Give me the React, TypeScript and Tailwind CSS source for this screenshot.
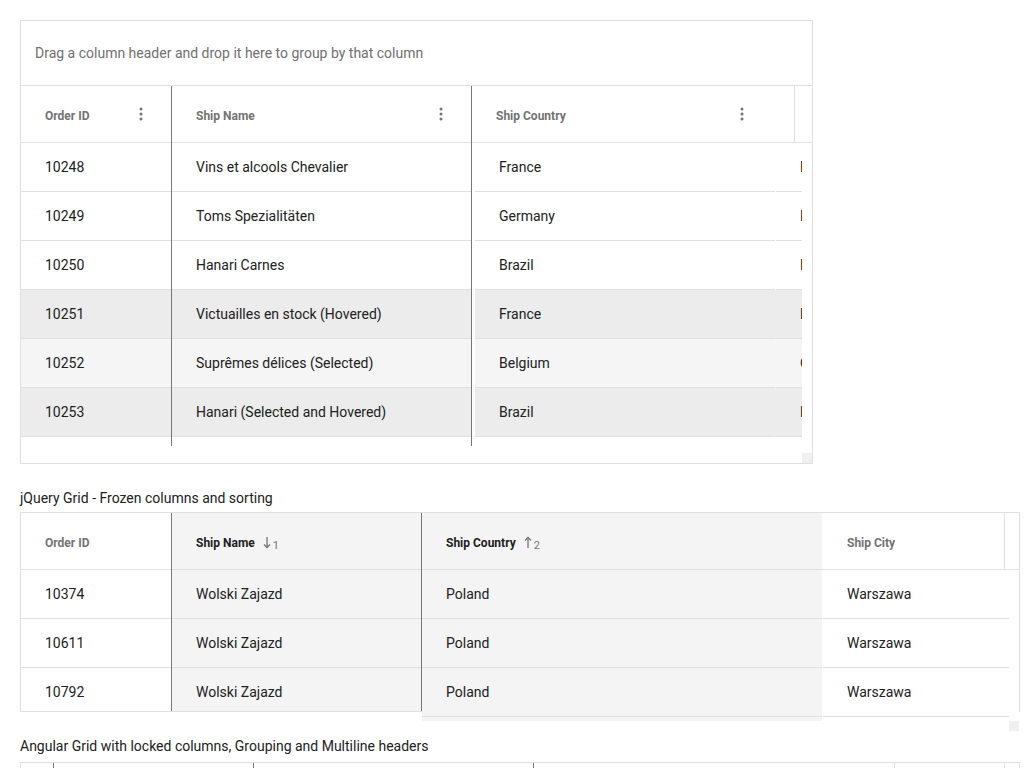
import React from 'react';

type Row = { id: string; name: string; country: string; city: string; bg: string };

const ROWS1: Row[] = [
  { id: '10248', name: 'Vins et alcools Chevalier', country: 'France', city: 'Reims', bg: '' },
  { id: '10249', name: 'Toms Spezialitäten', country: 'Germany', city: 'Münster', bg: '' },
  { id: '10250', name: 'Hanari Carnes', country: 'Brazil', city: 'Rio de Janeiro', bg: '' },
  { id: '10251', name: 'Victuailles en stock (Hovered)', country: 'France', city: 'Lyon', bg: 'bg-[#ececec]' },
  { id: '10252', name: 'Suprêmes délices (Selected)', country: 'Belgium', city: 'Charleroi', bg: 'bg-[#f5f5f5]' },
  { id: '10253', name: 'Hanari (Selected and Hovered)', country: 'Brazil', city: 'Rio de Janeiro', bg: 'bg-[#ececec]' },
];

const ROWS2 = [
  { id: '10374', name: 'Wolski Zajazd', country: 'Poland', city: 'Warszawa' },
  { id: '10611', name: 'Wolski Zajazd', country: 'Poland', city: 'Warszawa' },
  { id: '10792', name: 'Wolski Zajazd', country: 'Poland', city: 'Warszawa' },
];

function Kebab() {
  return (
    <svg width="20" height="20" viewBox="0 0 24 24" className="shrink-0">
      <circle cx="12" cy="6" r="1.8" fill="#757575" />
      <circle cx="12" cy="12" r="1.8" fill="#757575" />
      <circle cx="12" cy="18" r="1.8" fill="#757575" />
    </svg>
  );
}

function SortArrow({ up }: { up?: boolean }) {
  return (
    <svg width="10" height="13" viewBox="0 0 10 13" className="shrink-0">
      {up ? (
        <>
          <line x1="5" y1="1.5" x2="5" y2="12" stroke="#757575" strokeWidth="1.3" />
          <polyline points="2,4.5 5,1.5 8,4.5" fill="none" stroke="#757575" strokeWidth="1.3" />
        </>
      ) : (
        <>
          <line x1="5" y1="1" x2="5" y2="11.5" stroke="#757575" strokeWidth="1.3" />
          <polyline points="2,8.5 5,11.5 8,8.5" fill="none" stroke="#757575" strokeWidth="1.3" />
        </>
      )}
    </svg>
  );
}

const cellText = 'text-[14px] text-[#212121] whitespace-nowrap';
const headText = 'text-[12px] font-bold text-[#737373] whitespace-nowrap pt-[3px]';

function BodyCell({ children, bg = '', extra = '' }: { children: React.ReactNode; bg?: string; extra?: string }) {
  return (
    <div className={`h-[49px] shrink-0 border-b border-[#e0e0e0] flex items-center pl-[24px] overflow-hidden ${cellText} ${bg} ${extra}`}>
      {children}
    </div>
  );
}

function Grid1() {
  return (
    <div className="w-[793px] h-[444px] border border-[#e0e0e0] flex flex-col">
      <div className="h-[65px] shrink-0 border-b border-[#e0e0e0] flex items-center pl-[14px] text-[14px] text-[#707070]">
        Drag a column header and drop it here to group by that column
      </div>
      <div className="h-[360px] shrink-0 flex">
        {/* Order ID */}
        <div className="w-[151px] shrink-0 border-r border-[#777777] flex flex-col">
          <div className="h-[57px] shrink-0 border-b border-[#e0e0e0] flex items-center justify-between pl-[24px] pr-[20px]">
            <span className={headText}>Order ID</span>
            <Kebab />
          </div>
          {ROWS1.map((r) => (
            <BodyCell key={r.id} bg={r.bg}>{r.id}</BodyCell>
          ))}
        </div>
        {/* Ship Name */}
        <div className="w-[300px] shrink-0 border-r border-[#777777] flex flex-col">
          <div className="h-[57px] shrink-0 border-b border-[#e0e0e0] flex items-center justify-between pl-[24px] pr-[20px]">
            <span className={headText}>Ship Name</span>
            <Kebab />
          </div>
          {ROWS1.map((r) => (
            <BodyCell key={r.id} bg={r.bg}>{r.name}</BodyCell>
          ))}
        </div>
        {/* Scrollable area */}
        <div className="w-[340px] shrink-0 flex flex-col">
          <div className="h-[57px] shrink-0 border-b border-[#e0e0e0] flex">
            <div className="w-[323px] shrink-0 border-r border-[#e0e0e0] flex items-center justify-between pl-[24px] pr-[42px]">
              <span className={headText}>Ship Country</span>
              <Kebab />
            </div>
            <div className="flex-1" />
          </div>
          <div className="flex h-[303px]">
            <div className="w-[330px] shrink-0 overflow-hidden pl-[3px] flex flex-col">
              {ROWS1.map((r) => (
                <div key={r.id} className={`flex gap-px shrink-0 ${r.bg}`}>
                  <BodyCell extra="w-[300px]">{r.country}</BodyCell>
                  <BodyCell extra="w-[200px]">{r.city}</BodyCell>
                </div>
              ))}
            </div>
            <div className="w-[10px] shrink-0" />
          </div>
        </div>
      </div>
      <div className="flex-1 flex justify-end items-end">
        <div className="w-[10px] h-[10px] bg-[#f0f0f0]" />
      </div>
    </div>
  );
}

function Grid2() {
  return (
    <div className="w-[1000px] h-[200px] border-t border-x border-[#e0e0e0] flex items-start">
      {/* frozen */}
      <div className="h-[199px] shrink-0 flex overflow-hidden border-b border-[#e0e0e0]">
        <div className="w-[151px] shrink-0 border-r border-[#777777] flex flex-col">
          <div className="h-[57px] shrink-0 border-b border-[#e0e0e0] flex items-center pl-[24px]">
            <span className={headText}>Order ID</span>
          </div>
          {ROWS2.map((r) => (
            <BodyCell key={r.id}>{r.id}</BodyCell>
          ))}
        </div>
        <div className="w-[250px] shrink-0 border-r border-[#777777] flex flex-col bg-[#f4f4f4]">
          <div className="h-[57px] shrink-0 border-b border-[#e0e0e0] flex items-center pl-[24px] pt-[3px] gap-[7px]">
            <span className="text-[12px] font-bold text-[#212121] whitespace-nowrap">Ship Name</span>
            <span className="flex items-end">
              <SortArrow />
              <span className="text-[11px] text-[#757575] leading-none ml-[1px] translate-y-[2px]">1</span>
            </span>
          </div>
          {ROWS2.map((r) => (
            <BodyCell key={r.id}>{r.name}</BodyCell>
          ))}
        </div>
      </div>
      {/* scrolling */}
      <div className="w-[597px] h-[218px] shrink-0 flex flex-col">
        <div className="h-[57px] shrink-0 border-b border-[#e0e0e0] flex">
          <div className="w-[400px] shrink-0 bg-[#f4f4f4] flex items-center pl-[24px] pt-[3px] gap-[7px]">
            <span className="text-[12px] font-bold text-[#212121] whitespace-nowrap">Ship Country</span>
            <span className="flex items-end">
              <SortArrow up />
              <span className="text-[11px] text-[#757575] leading-none ml-[1px] translate-y-[2px]">2</span>
            </span>
          </div>
          <div className="w-[183px] shrink-0 border-r border-[#e0e0e0] flex items-center pl-[25px]">
            <span className={headText}>Ship City</span>
          </div>
          <div className="flex-1" />
        </div>
        <div className="flex h-[161px]">
          <div className="w-[587px] h-[151px] shrink-0 overflow-hidden flex">
            <div className="w-[400px] h-full shrink-0 bg-[#f4f4f4] flex flex-col">
              {ROWS2.map((r) => (
                <BodyCell key={r.id}>{r.country}</BodyCell>
              ))}
            </div>
            <div className="w-[187px] h-full shrink-0 pl-px flex flex-col">
              {ROWS2.map((r) => (
                <BodyCell key={r.id}>{r.city}</BodyCell>
              ))}
            </div>
          </div>
          <div className="w-[10px] h-full shrink-0 flex items-end">
            <div className="w-[10px] h-[10px] bg-[#f0f0f0]" />
          </div>
        </div>
      </div>
    </div>
  );
}

function Grid3() {
  return (
    <div className="w-[1000px] h-[40px] border-t border-x border-[#e0e0e0] flex">
      <div className="w-[33px] shrink-0 border-r border-[#777777]" />
      <div className="w-[200px] shrink-0 border-r border-[#777777]" />
      <div className="w-[280px] shrink-0 border-r border-[#777777]" />
      <div className="w-[361px] shrink-0 border-r border-[#e0e0e0]" />
      <div className="w-[110px] shrink-0 border-r border-[#e0e0e0]" />
      <div className="flex-1" />
    </div>
  );
}

export default function App() {
  return (
    <div className="min-h-screen bg-white pt-[20px] pl-[20px] font-[family-name:Roboto,sans-serif]">
      <Grid1 />
      <div className="mt-[24px] h-[20px] leading-[20px] text-[14px] text-[#212121]">jQuery Grid - Frozen columns and sorting</div>
      <div className="mt-[4px]">
        <Grid2 />
      </div>
      <div className="mt-[24px] h-[20px] leading-[20px] text-[14px] text-[#212121]">Angular Grid with locked columns, Grouping and Multiline headers</div>
      <div className="mt-[6px]">
        <Grid3 />
      </div>
    </div>
  );
}
